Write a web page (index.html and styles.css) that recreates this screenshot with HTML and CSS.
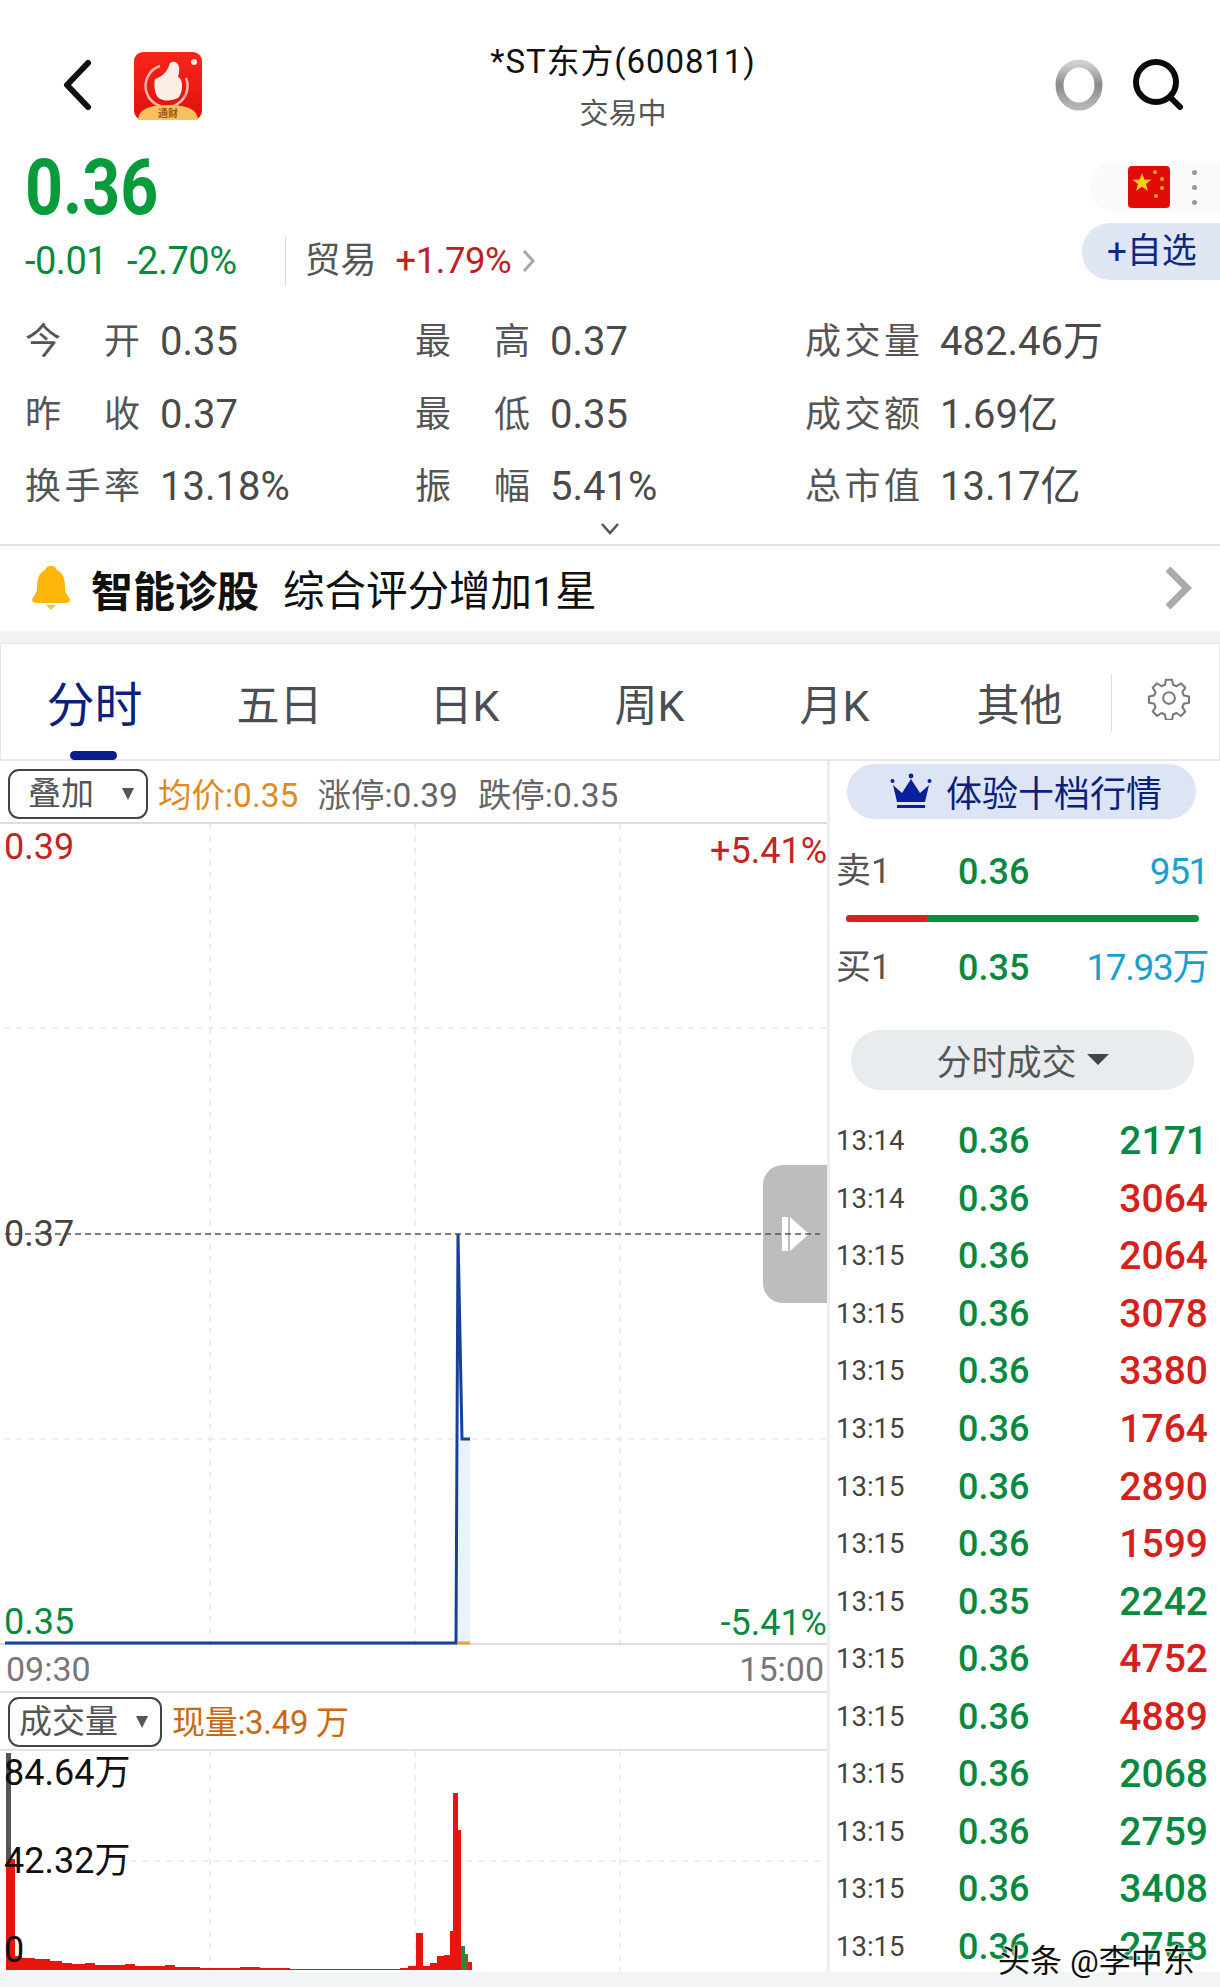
FILE: index.html
```html
<!DOCTYPE html>
<html lang="zh-CN">
<head>
    <meta charset="UTF-8">
    <title>*ST东方(600811)</title>
    <link rel="stylesheet" href="styles.css">
</head>
<body>
<div class="page">
    <div class="nav">
        <div class="nav-left">
            <svg class="back" width="30" height="52" viewBox="0 0 30 52"><path d="M26 4 L5 26 L26 48" fill="none" stroke="#111" stroke-width="6" stroke-linecap="round" stroke-linejoin="round"/></svg>
            <svg class="logo" width="68" height="68" viewBox="0 0 68 68">
                <defs>
                    <linearGradient id="lg" x1="0" y1="0" x2="0" y2="1"><stop offset="0" stop-color="#f7251a"/><stop offset="1" stop-color="#e0100c"/></linearGradient>
                    <linearGradient id="ring" x1="0" y1="0" x2="0" y2="1"><stop offset="0" stop-color="#d0d0d0"/><stop offset=".5" stop-color="#8a8a8a"/><stop offset="1" stop-color="#b5b5b5"/></linearGradient>
                </defs>
                <rect width="68" height="68" rx="9" fill="url(#lg)"/>
                <path d="M26 14 A21 21 0 1 0 52 26" fill="none" stroke="#f6b8ad" stroke-width="2.5"/>
                <path d="M21 27 C27 25 33 21 36 11 C42 7 48 13 44 25 C50 27 49 42 44 46 C36 50 26 49 23 44 C20 38 20 31 21 27Z" fill="#fbeee6"/>
                <circle cx="60" cy="10" r="3" fill="#fbe3da"/>
                <path d="M4 68 Q4 53 34 53 Q64 53 64 68Z" fill="#f8c05f"/>
                <text x="34" y="65" class="logo-text">通财</text>
            </svg>
        </div>
        <div class="nav-title">
            <div class="stock-name">*ST东方(600811)</div>
            <div class="stock-state">交易中</div>
        </div>
        <div class="nav-right">
            <svg width="50" height="54" viewBox="0 0 50 54"><ellipse cx="25" cy="27" rx="19.5" ry="21.5" fill="none" stroke="url(#ring)" stroke-width="8"/></svg>
            <svg width="52" height="54" viewBox="0 0 52 54"><circle cx="24" cy="24" r="20" fill="none" stroke="#0a0a0a" stroke-width="6"/><path d="M38 39 L48 49" stroke="#0a0a0a" stroke-width="6" stroke-linecap="round"/></svg>
        </div>
    </div>

    <div class="quote">
        <div class="quote-left">
            <div class="price">0.36</div>
            <div class="change-row">
                <span class="change">-0.01</span>
                <span class="change change-pct">-2.70%</span>
                <span class="vline"></span>
                <span class="sector">贸易</span>
                <span class="sector-pct">+1.79%</span>
                <svg width="16" height="26" viewBox="0 0 16 26"><path d="M3 3 L12 13 L3 23" fill="none" stroke="#a8a8a8" stroke-width="3"/></svg>
            </div>
        </div>
        <div class="quote-right">
            <div class="flag-pill">
                <svg width="42" height="42" viewBox="0 0 42 42">
                    <rect width="42" height="42" rx="4" fill="#e30a0a"/>
                    <polygon points="14,7 16.4,13.6 23.5,13.8 17.9,18 19.9,24.8 14,20.8 8.1,24.8 10.1,18 4.5,13.8 11.6,13.6" fill="#fbd00f"/>
                    <circle cx="27" cy="6" r="2" fill="#fbb00f"/><circle cx="34" cy="13" r="2" fill="#fbb00f"/>
                    <circle cx="34" cy="22" r="2" fill="#fbb00f"/><circle cx="28" cy="30" r="2" fill="#fbb00f"/>
                </svg>
                <div class="dots"><i></i><i></i><i></i></div>
            </div>
            <div class="watch-btn">+自选</div>
        </div>
    </div>

    <div class="stats">
        <div class="stat"><span class="stat-label">今开</span><span class="stat-value">0.35</span></div>
        <div class="stat"><span class="stat-label">最高</span><span class="stat-value">0.37</span></div>
        <div class="stat"><span class="stat-label">成交量</span><span class="stat-value">482.46万</span></div>
        <div class="stat"><span class="stat-label">昨收</span><span class="stat-value">0.37</span></div>
        <div class="stat"><span class="stat-label">最低</span><span class="stat-value">0.35</span></div>
        <div class="stat"><span class="stat-label">成交额</span><span class="stat-value">1.69亿</span></div>
        <div class="stat"><span class="stat-label">换手率</span><span class="stat-value">13.18%</span></div>
        <div class="stat"><span class="stat-label">振幅</span><span class="stat-value">5.41%</span></div>
        <div class="stat"><span class="stat-label">总市值</span><span class="stat-value">13.17亿</span></div>
    </div>
    <div class="expand">
        <svg width="20" height="14" viewBox="0 0 20 14"><path d="M2 2 L10 11 L18 2" fill="none" stroke="#555" stroke-width="2.5"/></svg>
    </div>

    <div class="notice">
        <svg class="bell" width="40" height="46" viewBox="0 0 40 46"><path d="M20 1 C24 1 25 3 26 5 C33 8 34 16 34 23 C34 29 38 31 39 35 C39 37 37 38 35 38 H5 C3 38 1 37 1 35 C2 31 6 29 6 23 C6 16 7 8 14 5 C15 3 16 1 20 1Z" fill="#fdb609"/><path d="M15 40 H25 L20 45Z" fill="#f5c04a"/></svg>
        <span class="notice-title">智能诊股</span>
        <span class="notice-text">综合评分增加1星</span>
        <svg class="notice-arrow" width="28" height="44" viewBox="0 0 28 44"><path d="M4 3 L23 22 L4 41" fill="none" stroke="#aaa" stroke-width="7"/></svg>
    </div>
    <div class="band"></div>

    <div class="tabs">
        <div class="tab tab-active">分时</div>
        <div class="tab">五日</div>
        <div class="tab">日K</div>
        <div class="tab">周K</div>
        <div class="tab">月K</div>
        <div class="tab">其他</div>
        <div class="tab-gear">
            <svg width="44" height="44" viewBox="0 0 24 24" fill="none" stroke="#777" stroke-width="1.1" stroke-linejoin="round"><circle cx="12" cy="12" r="3.2"/><path d="M10.3 2h3.4l.5 2.8 1.9.8 2.4-1.6 2.4 2.4-1.6 2.4.8 1.9 2.8.5v3.4l-2.8.5-.8 1.9 1.6 2.4-2.4 2.4-2.4-1.6-1.9.8-.5 2.8h-3.4l-.5-2.8-1.9-.8-2.4 1.6-2.4-2.4 1.6-2.4-.8-1.9-2.8-.5v-3.4l2.8-.5.8-1.9-1.6-2.4 2.4-2.4 2.4 1.6 1.9-.8z"/></svg>
        </div>
    </div>

    <div class="board">
        <div class="board-left">
            <div class="toolbar">
                <div class="select select-overlay"><span>叠加</span><i class="caret"></i></div>
                <span class="tool-avg">均价:0.35</span>
                <span class="tool-grey">涨停:0.39</span>
                <span class="tool-grey">跌停:0.35</span>
            </div>
            <div class="chart">
                <div class="handle">
                    <svg width="30" height="36" viewBox="0 0 30 36"><rect x="1" y="1" width="6" height="34" fill="#fff"/><path d="M9 1 L28 18 L9 35Z" fill="#fff"/></svg>
                </div>
                <svg class="chart-svg" width="827" height="822" viewBox="0 0 827 822">
                    <g class="grid">
                        <path d="M210 0V822M415 0V822M620 0V822"/>
                        <path d="M4 204H826M4 615H826"/>
                    </g>
                    <path d="M459 615H470V819H458Z" fill="#eaf3fc"/>
                    <path d="M5 410H820" class="pre-close"/>
                    <path d="M5 819H456L458 410L462 615H470" fill="none" stroke="#16419a" stroke-width="3"/>
                    <path d="M458 819H470" stroke="#e9a13a" stroke-width="3"/>
                </svg>
                <span class="axis axis-up axis-tl">0.39</span>
                <span class="axis axis-up axis-tr">+5.41%</span>
                <span class="axis axis-mid">0.37</span>
                <span class="axis axis-down axis-bl">0.35</span>
                <span class="axis axis-down axis-br">-5.41%</span>
            </div>
            <div class="times"><span>09:30</span><span>15:00</span></div>
            <div class="toolbar toolbar-vol">
                <div class="select select-vol"><span>成交量</span><i class="caret"></i></div>
                <span class="tool-vol">现量:3.49 万</span>
            </div>
            <div class="vol-chart">
                <svg class="chart-svg" width="827" height="220" viewBox="0 0 827 220">
                    <g class="grid">
                        <path d="M210 0V220M415 0V220M620 0V220"/>
                        <path d="M130 110H826"/>
                    </g>
                    <rect x="6" y="2" width="5" height="108" fill="#555"/>
                    <path d="M6 219V108H15V205H22V207H35V208H50V210H62V212H72V213H85V212H95V214H125V213H135V215H165V214H175V216H200V217H240V216H260V217H290V218H400V217H408V215H416V182H423V215H430V212H437V205H444V204H450V180H453V42H458V79H461V219Z" fill="#e8140e"/>
                    <path d="M461 219V195H465V219Z" fill="#1d8f3a"/>
                    <path d="M465 219V203H468V219Z" fill="#8f5a1d"/>
                    <path d="M468 219V211H472V219Z" fill="#e8140e"/>
                </svg>
                <span class="vol-label vol-top">84.64万</span>
                <span class="vol-label vol-mid">42.32万</span>
                <span class="vol-label vol-low">0</span>
            </div>
        </div>

        <div class="board-right">
            <div class="level-pill">
                <svg width="42" height="36" viewBox="0 0 42 36"><path d="M3 12 L12 20 L21 6 L30 20 L39 12 L35 29 H7Z" fill="#0a1f9c"/><rect x="7" y="32" width="28" height="3" fill="#0a1f9c"/><circle cx="21" cy="3" r="2.4" fill="#0a1f9c"/><circle cx="2.5" cy="8" r="2" fill="#0a1f9c"/><circle cx="39.5" cy="8" r="2" fill="#0a1f9c"/></svg>
                <span>体验十档行情</span>
            </div>
            <div class="level"><span class="level-name">卖1</span><span class="green strong">0.36</span><span class="level-vol">951</span></div>
            <div class="level-bar"><div class="level-bar-red"></div></div>
            <div class="level level-buy"><span class="level-name">买1</span><span class="green strong">0.35</span><span class="level-vol">17.93万</span></div>
            <div class="ticks-pill"><span>分时成交</span><i class="ticks-caret"></i></div>
            <div class="ticks">
                <div class="tick"><span class="tick-time">13:14</span><span class="green strong">0.36</span><span class="tick-vol green">2171</span></div>
                <div class="tick"><span class="tick-time">13:14</span><span class="green strong">0.36</span><span class="tick-vol red">3064</span></div>
                <div class="tick"><span class="tick-time">13:15</span><span class="green strong">0.36</span><span class="tick-vol red">2064</span></div>
                <div class="tick"><span class="tick-time">13:15</span><span class="green strong">0.36</span><span class="tick-vol red">3078</span></div>
                <div class="tick"><span class="tick-time">13:15</span><span class="green strong">0.36</span><span class="tick-vol red">3380</span></div>
                <div class="tick"><span class="tick-time">13:15</span><span class="green strong">0.36</span><span class="tick-vol red">1764</span></div>
                <div class="tick"><span class="tick-time">13:15</span><span class="green strong">0.36</span><span class="tick-vol red">2890</span></div>
                <div class="tick"><span class="tick-time">13:15</span><span class="green strong">0.36</span><span class="tick-vol red">1599</span></div>
                <div class="tick"><span class="tick-time">13:15</span><span class="green strong">0.35</span><span class="tick-vol green">2242</span></div>
                <div class="tick"><span class="tick-time">13:15</span><span class="green strong">0.36</span><span class="tick-vol red">4752</span></div>
                <div class="tick"><span class="tick-time">13:15</span><span class="green strong">0.36</span><span class="tick-vol red">4889</span></div>
                <div class="tick"><span class="tick-time">13:15</span><span class="green strong">0.36</span><span class="tick-vol green">2068</span></div>
                <div class="tick"><span class="tick-time">13:15</span><span class="green strong">0.36</span><span class="tick-vol green">2759</span></div>
                <div class="tick"><span class="tick-time">13:15</span><span class="green strong">0.36</span><span class="tick-vol green">3408</span></div>
                <div class="tick"><span class="tick-time">13:15</span><span class="green strong">0.36</span><span class="tick-vol green">2758</span></div>
            </div>
        </div>
    </div>
    <div class="footer-band"></div>
    <div class="watermark">头条 @李中东</div>
</div>
</body>
</html>
```
FILE: styles.css
```css
* {
    box-sizing: border-box;
}

body {
    margin: 0;
    background: #fff;
    font-family: Roboto, "Noto Sans CJK SC", sans-serif;
    color: #444;
}

.page {
    position: relative;
    width: 1220px;
    height: 1987px;
    overflow: hidden;
}

/* top nav */
.nav {
    display: flex;
    height: 150px;
}

.nav-left {
    width: 470px;
    padding: 59px 0 0 62px;
    display: flex;
    align-items: flex-start;
    gap: 42px;
}

.logo {
    margin-top: -7px;
}

.logo-text {
    font-size: 10px;
    font-weight: 700;
    fill: #9a5a10;
    text-anchor: middle;
}

.nav-title {
    width: 306px;
    text-align: center;
    padding-top: 38px;
}

.stock-name {
    font-size: 33px;
    line-height: 48px;
    color: #111;
    white-space: nowrap;
    letter-spacing: 0.9px;
}

.stock-state {
    font-size: 29px;
    line-height: 40px;
    margin-top: 8px;
    color: #555;
}

.nav-right {
    flex: 1;
    display: flex;
    justify-content: flex-end;
    gap: 28px;
    padding: 58px 36px 0 0;
    align-items: flex-start;
}

/* price block */
.quote {
    display: flex;
    justify-content: space-between;
    height: 145px;
}

.quote-left {
    padding-left: 25px;
}

.price {
    font-weight: 700;
    font-size: 78px;
    line-height: 76px;
    color: #079b3c;
    transform: scaleX(0.85);
    transform-origin: left;
}

.change-row {
    display: flex;
    align-items: center;
    height: 60px;
    margin-top: 5px;
    line-height: 50px;
}

.change {
    font-size: 38px;
    color: #078a3f;
    letter-spacing: -0.5px;
}

.change-pct {
    margin-left: 20px;
}

.vline {
    width: 1px;
    height: 50px;
    background: #ddd;
    margin: 0 19px 0 48px;
}

.sector {
    font-size: 36px;
    color: #555;
}

.sector-pct {
    font-size: 36.5px;
    color: #c0201f;
    margin: 0 10px 0 19px;
    letter-spacing: -0.5px;
}

.quote-right {
    width: 138px;
    display: flex;
    flex-direction: column;
    align-items: flex-end;
    margin-top: 12px;
}

.flag-pill {
    width: 130px;
    height: 50px;
    background: #fafafa;
    border-radius: 25px 0 0 25px;
    display: flex;
    align-items: center;
    padding-left: 38px;
}

.dots {
    margin-left: 22px;
    display: flex;
    flex-direction: column;
    gap: 10px;
}

.dots i {
    width: 5px;
    height: 5px;
    border-radius: 50%;
    background: #999;
}

.watch-btn {
    width: 138px;
    height: 57px;
    margin-top: 11px;
    background: #dfe6f4;
    border-radius: 28px 0 0 28px;
    color: #0b2a80;
    font-size: 35px;
    line-height: 57px;
    padding-left: 25px;
}

/* stats */
.stats {
    display: grid;
    grid-template-columns: 390px 390px 1fr;
    grid-auto-rows: 72.5px;
    padding: 11px 0 0 25px;
}

.stat {
    display: flex;
    align-items: center;
    height: 72.5px;
    line-height: 50px;
}

.stat-label {
    width: 115px;
    font-size: 36px;
    color: #555;
    text-align-last: justify;
    white-space: nowrap;
}

.stat-value {
    margin-left: 20px;
    font-size: 40px;
    color: #4a4a4a;
    white-space: nowrap;
}

.expand {
    height: 30px;
    padding-top: 6px;
    border-bottom: 2px solid #e3e3e3;
    margin-top: -8px;
}

.expand svg {
    display: block;
    margin-left: 600px;
}

/* notice */
.notice {
    height: 85px;
    display: flex;
    align-items: center;
    padding-left: 31px;
    color: #111;
    position: relative;
}

.bell {
    margin-right: 20px;
}

.notice-title {
    font-size: 42px;
    font-weight: 700;
}

.notice-text {
    font-size: 41.5px;
    margin-left: 24px;
}

.notice-arrow {
    margin-left: auto;
    margin-right: 28px;
}

.band {
    height: 12px;
    background: #f0f2f5;
}

/* tabs */
.tabs {
    height: 118px;
    display: flex;
    align-items: center;
    border: 1px solid #e6e6e6;
    border-width: 1px 1px 2px;
    padding: 9px 0 0 1px;
}

.tab {
    width: 185px;
    text-align: center;
    font-size: 43px;
    line-height: 58px;
    color: #4a4f55;
}

.tab-active {
    color: #0c1f7c;
    font-size: 48px;
    position: relative;
}

.tab-active::after {
    content: "";
    position: absolute;
    left: 68px;
    bottom: -25px;
    width: 47px;
    height: 9px;
    border-radius: 5px;
    background: #0a1f8f;
}

.tab-gear {
    margin: -6px 0 0 -1px;
    width: 107px;
    height: 58px;
    border-left: 1px solid #ddd;
    padding: 2px 0 0 35px;
}

/* chart area */
.board {
    display: flex;
    height: 1211px;
}

.board-left {
    width: 827px;
    flex: none;
}

.toolbar {
    height: 61px;
    display: flex;
    align-items: center;
    padding: 6px 0 0 8px;
    font-size: 33.5px;
    line-height: 46px;
}

.select {
    height: 50px;
    border: 2px solid #444;
    border-radius: 11px;
    display: flex;
    align-items: center;
    justify-content: space-between;
    color: #555;
    font-size: 33px;
}

.select-overlay {
    width: 140px;
    padding: 0 12px 0 18px;
}

.select-vol {
    width: 154px;
    padding: 0 12px 0 9px;
}

.caret {
    border-left: 6px solid transparent;
    border-right: 6px solid transparent;
    border-top: 12px solid #555;
}

.tool-avg {
    color: #e08a1e;
    margin: 3px 19px 0 10px;
    white-space: nowrap;
}

.tool-grey {
    color: #666;
    margin: 3px 20px 0 0;
    white-space: nowrap;
}

.chart {
    position: relative;
    height: 823px;
    border-top: 2px solid #ddd;
    border-bottom: 2px solid #ddd;
}

.chart-svg {
    display: block;
    position: relative;
}

.grid path {
    fill: none;
    stroke: #ddd;
    stroke-width: 1;
    stroke-dasharray: 6 6;
}

.pre-close {
    fill: none;
    stroke: #555;
    stroke-width: 1.5;
    stroke-dasharray: 6 4;
}

.axis {
    position: absolute;
    font-size: 36px;
    line-height: 40px;
    white-space: nowrap;
}

.axis-up {
    color: #c2241f;
}

.axis-down {
    color: #078a3f;
}

.axis-mid {
    left: 4px;
    top: 390px;
    color: #444;
}

.axis-tl {
    left: 4px;
    top: 3px;
}

.axis-tr {
    right: 0;
    top: 7px;
}

.axis-bl {
    left: 4px;
    top: 778px;
}

.axis-br {
    right: 0;
    top: 779px;
}

.handle {
    position: absolute;
    right: 0;
    top: 341px;
    width: 64px;
    height: 138px;
    background: #bdbdbd;
    border-radius: 20px 0 0 20px;
    display: flex;
    align-items: center;
    padding-left: 18px;
}

.times {
    height: 48px;
    display: flex;
    justify-content: space-between;
    align-items: center;
    padding: 2px 3px 0 6px;
    font-size: 34px;
    color: #777;
    border-bottom: 2px solid #e3e3e3;
}

.toolbar-vol {
    height: 58px;
    padding-top: 2px;
    border-bottom: 2px solid #e3e3e3;
}

.tool-vol {
    color: #c96a10;
    margin: 3px 0 0 10px;
    white-space: nowrap;
    font-size: 33px;
    letter-spacing: -0.3px;
}

.vol-chart {
    position: relative;
    height: 220px;
}

.vol-label {
    position: absolute;
    left: 4px;
    font-size: 36px;
    line-height: 40px;
    color: #111;
    white-space: nowrap;
}

.vol-top {
    top: 2px;
}

.vol-mid {
    top: 90px;
}

.vol-low {
    top: 179px;
}

/* right column */
.board-right {
    flex: 1;
    border-left: 3px solid #eee;
    position: relative;
    padding: 3px 12px 0 6px;
}

.level-pill {
    height: 55px;
    margin: 0 12px 0 11px;
    width: 349px;
    border-radius: 28px;
    background: #dde5f5;
    color: #0c1f7c;
    font-size: 36px;
    display: flex;
    align-items: center;
    padding-left: 43px;
    gap: 14px;
}

.level {
    display: grid;
    grid-template-columns: 122px 1fr auto;
    align-items: center;
    height: 60px;
    margin-top: 23px;
    font-size: 36px;
    line-height: 48px;
}

.level-name {
    font-size: 35px;
    color: #555;
}

.level-vol {
    color: #19a0d0;
    font-size: 37px;
    letter-spacing: -1.4px;
}

.level-bar {
    height: 7px;
    width: 353px;
    margin: 13px 0 0 10px;
    background: #0b8f3e;
    border-radius: 4px;
    overflow: hidden;
}

.level-bar-red {
    width: 81px;
    height: 100%;
    background: #d8221f;
}

.level-buy {
    margin-top: 16px;
}

.green {
    color: #078a3f;
}

.red {
    color: #d5201c;
}

.strong {
    font-weight: 500;
}

.ticks-pill {
    width: 343px;
    height: 60px;
    margin: 32px 0 0 15px;
    border-radius: 30px;
    background: #e9ecee;
    color: #555;
    font-size: 35px;
    display: flex;
    align-items: center;
    justify-content: center;
    gap: 10px;
}

.ticks-caret {
    border-left: 11px solid transparent;
    border-right: 11px solid transparent;
    border-top: 11px solid #444;
}

.ticks {
    margin-top: 23px;
}

.tick {
    display: grid;
    grid-template-columns: 122px 1fr auto;
    align-items: center;
    height: 57.56px;
    font-size: 36px;
    line-height: 48px;
}

.tick-time {
    font-size: 27.5px;
    color: #444;
}

.tick-vol {
    font-size: 39px;
    font-weight: 500;
}

.footer-band {
    position: absolute;
    left: 0;
    right: 0;
    bottom: 0;
    height: 15px;
    background: #f3f4f6;
}

.watermark {
    position: absolute;
    left: 998px;
    top: 1941px;
    font-size: 32px;
    line-height: 40px;
    color: #111;
    white-space: nowrap;
    text-shadow: 0 0 2px #fff, 0 0 2px #fff, 0 0 3px #fff;
}
```
